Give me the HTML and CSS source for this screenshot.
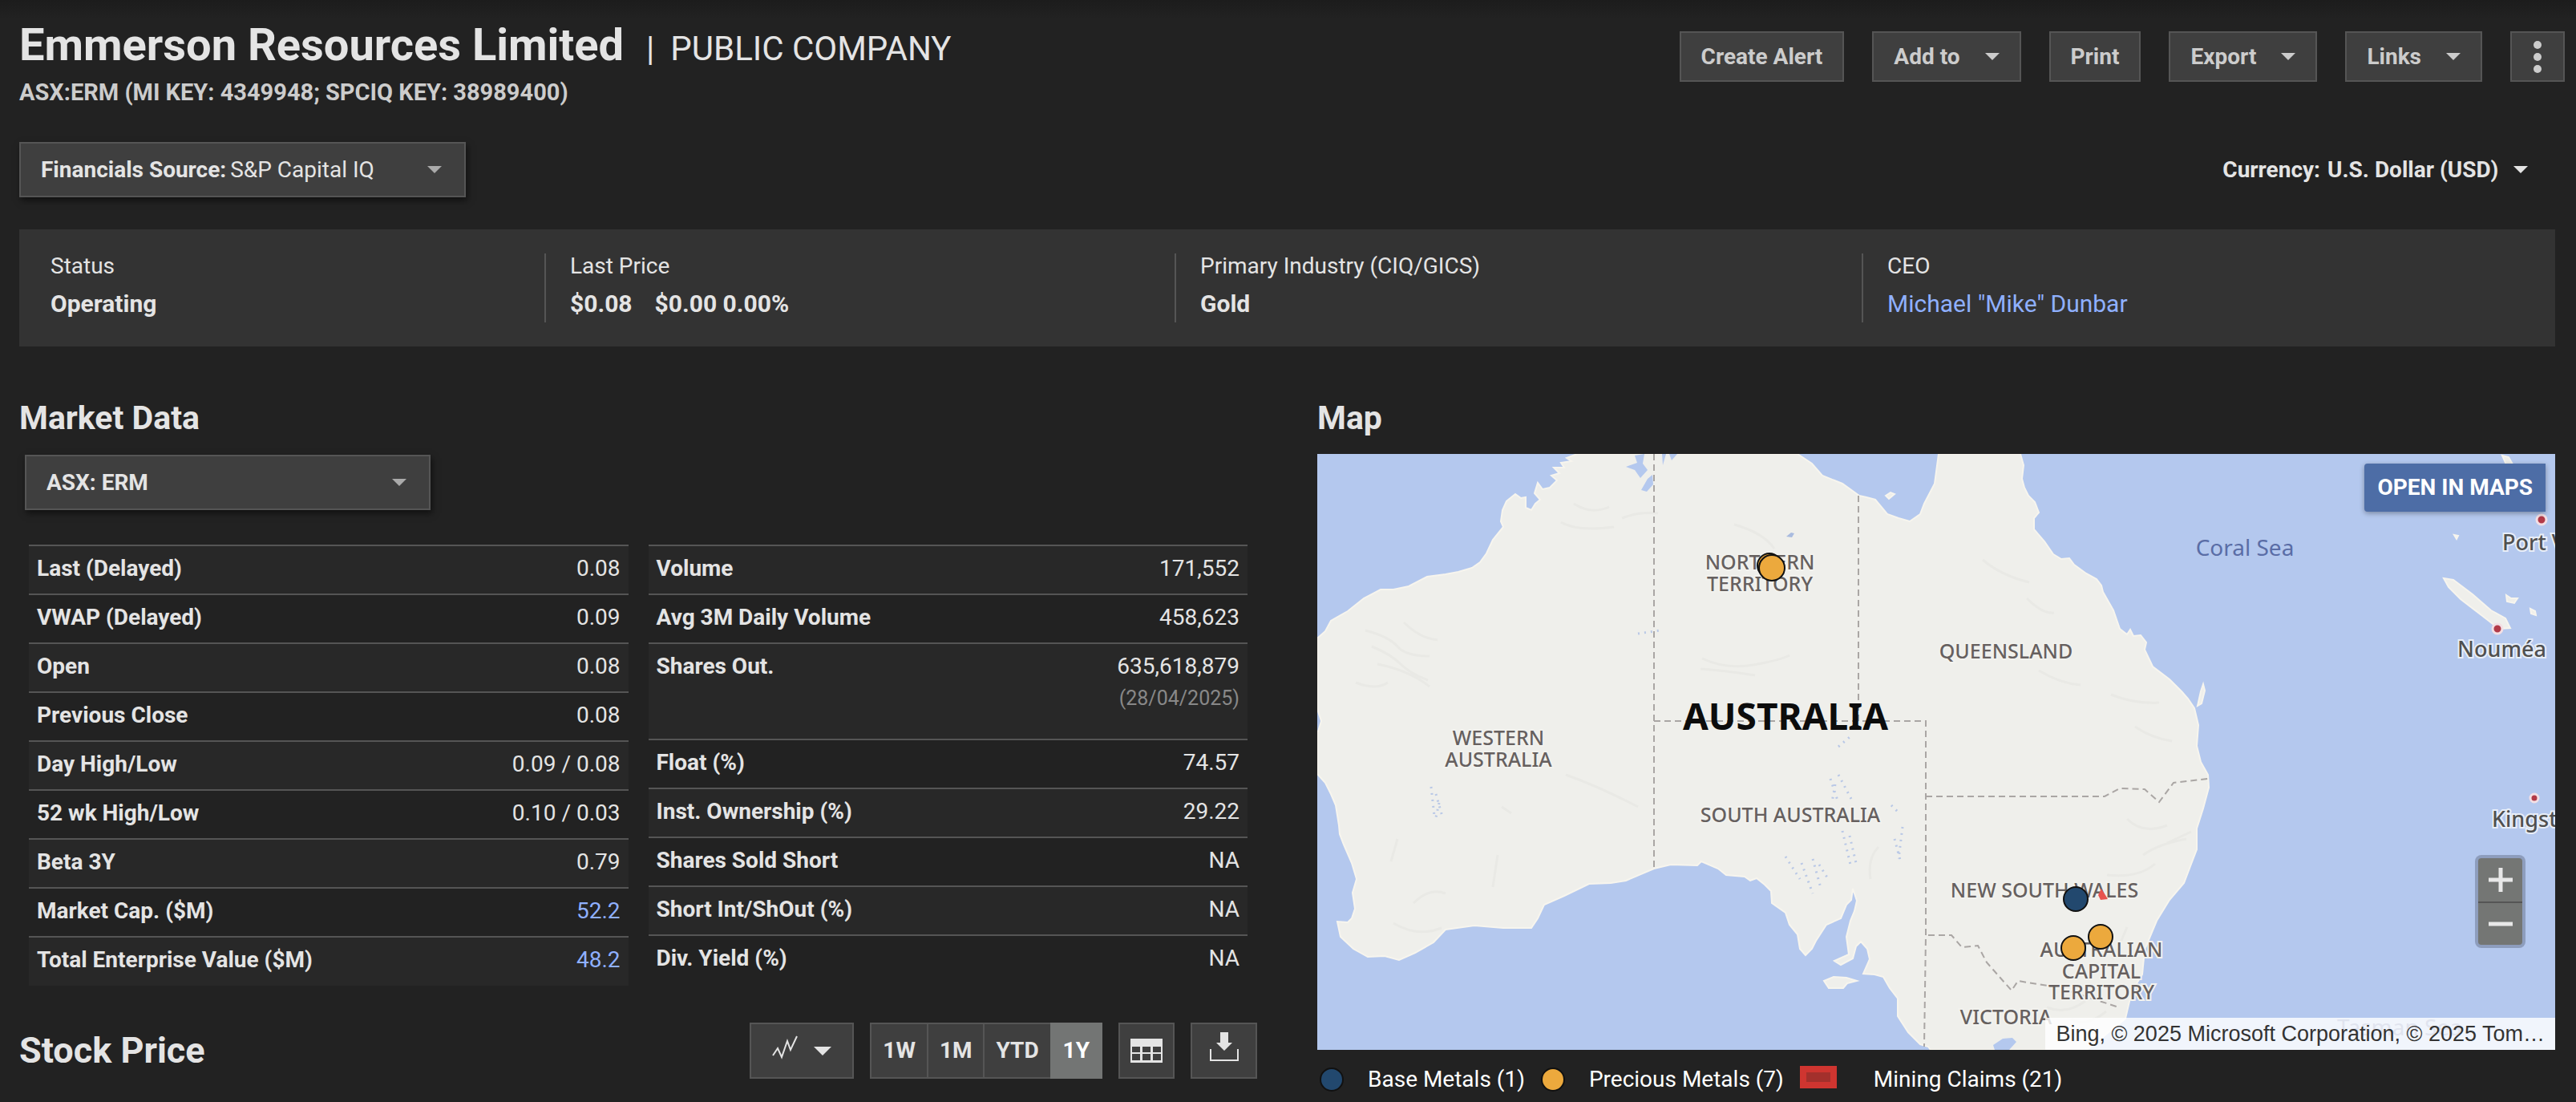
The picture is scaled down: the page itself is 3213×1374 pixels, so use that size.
FILE: index.html
```html
<!DOCTYPE html>
<html lang="en">
<head>
<meta charset="utf-8">
<title>Emmerson Resources Limited</title>
<link rel="stylesheet" href="styles.css">
</head>
<body>
<svg class="defs" aria-hidden="true">
  <symbol id="caret" viewBox="0 0 18 9"><path d="M0 0h18L9 9z" fill="currentColor"/></symbol>
</svg>
<main class="page">
  <header class="header">
    <div class="identity">
      <h1 class="title">Emmerson Resources Limited <span class="title-type"><span class="bar">|</span>PUBLIC COMPANY</span></h1>
      <p class="keys">ASX:ERM (MI KEY: 4349948; SPCIQ KEY: 38989400)</p>
    </div>
    <div class="actions">
      <button class="btn">Create Alert</button>
      <button class="btn">Add to<svg class="caret"><use href="#caret"/></svg></button>
      <button class="btn">Print</button>
      <button class="btn">Export<svg class="caret"><use href="#caret"/></svg></button>
      <button class="btn">Links<svg class="caret"><use href="#caret"/></svg></button>
      <button class="btn btn-more" aria-label="More"><svg viewBox="0 0 10 40" class="more"><circle cx="5" cy="5" r="5"/><circle cx="5" cy="20" r="5"/><circle cx="5" cy="35" r="5"/></svg></button>
    </div>
  </header>

  <div class="settings">
    <div class="picker picker-source">
      <label for="source">Financials Source:</label>
      <select id="source"><option>S&amp;P Capital IQ</option></select>
      <svg class="caret"><use href="#caret"/></svg>
    </div>
    <div class="currency">
      <label for="currency">Currency:</label>
      <select id="currency"><option>U.S. Dollar (USD)</option></select>
      <svg class="caret"><use href="#caret"/></svg>
    </div>
  </div>

  <dl class="summary">
    <div class="fact"><dt>Status</dt><dd>Operating</dd></div>
    <div class="fact"><dt>Last Price</dt><dd>$0.08<span class="change">$0.00 0.00%</span></dd></div>
    <div class="fact"><dt>Primary Industry (CIQ/GICS)</dt><dd>Gold</dd></div>
    <div class="fact"><dt>CEO</dt><dd><a class="link" href="#">Michael "Mike" Dunbar</a></dd></div>
  </dl>

  <div class="columns">
    <section class="column">
      <h2 class="heading">Market Data</h2>
      <div class="picker picker-ticker">
        <select id="ticker" aria-label="Ticker"><option>ASX: ERM</option></select>
        <svg class="caret"><use href="#caret"/></svg>
      </div>
      <div class="tables">
        <table class="data">
          <tr><th scope="row">Last (Delayed)</th><td>0.08</td></tr>
          <tr><th scope="row">VWAP (Delayed)</th><td>0.09</td></tr>
          <tr><th scope="row">Open</th><td>0.08</td></tr>
          <tr><th scope="row">Previous Close</th><td>0.08</td></tr>
          <tr><th scope="row">Day High/Low</th><td>0.09 / 0.08</td></tr>
          <tr><th scope="row">52 wk High/Low</th><td>0.10 / 0.03</td></tr>
          <tr><th scope="row">Beta 3Y</th><td>0.79</td></tr>
          <tr><th scope="row">Market Cap. ($M)</th><td><a class="link" href="#">52.2</a></td></tr>
          <tr><th scope="row">Total Enterprise Value ($M)</th><td><a class="link" href="#">48.2</a></td></tr>
        </table>
        <table class="data">
          <tr><th scope="row">Volume</th><td>171,552</td></tr>
          <tr><th scope="row">Avg 3M Daily Volume</th><td>458,623</td></tr>
          <tr class="tall"><th scope="row">Shares Out.</th><td>635,618,879<span class="asof">(28/04/2025)</span></td></tr>
          <tr><th scope="row">Float (%)</th><td>74.57</td></tr>
          <tr><th scope="row">Inst. Ownership (%)</th><td>29.22</td></tr>
          <tr><th scope="row">Shares Sold Short</th><td>NA</td></tr>
          <tr><th scope="row">Short Int/ShOut (%)</th><td>NA</td></tr>
          <tr><th scope="row">Div. Yield (%)</th><td>NA</td></tr>
        </table>
      </div>
      <div class="stock">
        <h2 class="heading heading-lg">Stock Price</h2>
        <div class="tools">
          <button class="tool tool-chart" aria-label="Chart type"><svg viewBox="0 0 32 30" class="ic-chart"><path d="M1 25l6-9 5 11 7-20 4 11L31 1" fill="none" stroke="currentColor" stroke-width="2"/></svg><svg class="caret caret-lg"><use href="#caret"/></svg></button>
          <div class="ranges">
            <button class="range">1W</button><button class="range">1M</button><button class="range">YTD</button><button class="range active">1Y</button>
          </div>
          <button class="tool" aria-label="Table"><svg viewBox="0 0 40 30" class="ic-table"><path fill-rule="evenodd" fill="currentColor" d="M0 0h40v30H0zM2 10v7h10v-7zM15 10v7h10v-7zM28 10v7h10v-7zM2 19v8h10v-8zM15 19v8h10v-8zM28 19v8h10v-8z"/></svg></button>
          <button class="tool tool-download" aria-label="Download"><svg viewBox="0 0 36 36" class="ic-download"><path fill="currentColor" d="M13 0h10v13h5L18 23 8 13h5z"/><path d="M1 21v14h34V21" fill="none" stroke="currentColor" stroke-width="2"/></svg></button>
        </div>
      </div>
    </section>

    <section class="column">
      <h2 class="heading">Map</h2>
      <div class="map">
        <svg class="map-art" viewBox="0 0 1544 743" preserveAspectRatio="xMidYMid slice">
          <rect width="1544" height="743" fill="#b4c8ee"/>
          <path class="land" d="M324 0L311 5 317 9 304 11 308 17 295 17 302 24 292 27 299 33 290 42 281 44 275 36 271 49 278 57 272 62 267 70 260 67 260 54 254 55 247 50 236 59 231 70 229 84 232 91 219 107 211 124 203 135 193 142 176 147 160 150 137 153 114 165 95 169 79 169 58 180 38 196 17 208 10 221 1 229 0 229V318L5 333 1 346 0 346V399L10 410 17 424 23 438 27 463 28 474 33 487 43 510 49 530 44 547 47 567 43 579 38 584 25 583 29 602 45 617 63 627 84 626 102 631 122 622 145 609 160 593 196 588 232 591 267 591 275 579 283 562 308 551 339 536 366 535 385 532 420 517 441 512 474 513 479 508 500 517 510 525 533 527 540 532 548 529 558 537 566 545 567 560 584 572 589 587 599 599 602 617 609 625 617 617 622 607 635 587 653 579 660 562 666 556 668 542 673 557 670 570 665 582 660 602 663 624 645 632 653 637 668 629 672 614 678 608 686 617 689 630 681 648 695 649 706 652 714 666 724 679 724 701 737 721 752 736 762 739 765 743H960L1008 704 1011 691 1016 670 1029 649 1032 618 1047 582 1063 556 1081 535 1089 514 1097 493 1097 467 1105 442 1112 416 1111 400 1102 384 1097 364 1099 338 1094 317 1086 305 1078 296 1063 281 1042 265 1032 244 1034 235 1027 226 1018 227 1014 219 1010 225 1001 218 993 195 980 172 978 164 972 156 959 149 944 138 938 130 928 131 918 125 907 109 894 94 894 80 900 73 895 60 887 52 882 42 879 31 881 14 877 0H775L770 37 757 62 752 75 739 84 725 80 711 75 696 57 685 54 676 52 655 37 630 27 617 12 599 0z"/>
          <path class="land" d="M632 657l12-5 16 1 13 4-12 3-5 6-18 0zM1102 296l3-9 2 8-4 16-5 3zM1405 155l12 2 24 18 23 20 18 10 6 12-14 1-22-17-26-20-15-15zM1483 176l6 4 8 0-4 6-9-2zM1513 193l6 3 1 5-6-2zM1478 2l8 2 8 14-8 2zM1418 101l5 1-2 4zM709 52l6-4 5 2-7 6z"/>
          <path class="water" d="M385 16l14-5-3-9 12-2-2 12 6 8-9 10-7-10zM404 45l8-14 6-5 1 12-8 9zM439 0l3 8 7-8zM430 0l1 14 4-14zM843 737l12-8 12-1 5 5-9 10h-18zM262 64l3-12 6 2-3 10z"/>
          <g class="relief">
            <path d="M60 220q30 8 40 20t40 12M68 240q24 10 36 22t34 20M108 210q20 20 42 22M75 262q40 8 65 28M48 285q25 10 40 0M320 62q22 14 44 4M304 85q20 12 66 6M380 80q20-8 45-6M480 255q30 14 64 8t45-12M478 268q30 2 68 8M520 88q36 10 50 30M830 132q24 20 58 28M885 180q20 20 34 18M900 270q26 16 52 18M990 300q30 12 60 10M1020 340q20 14 46 18M1010 455q20 20 50 8M1030 500q20-14 54-20M985 525q40 4 60-14M1060 485l30-14M975 540q30 20 50 6M700 490q-14 14-10 40M1010 590q-8 20-18 40M910 690q24 10 48-8M940 705q20 10 44-10M95 585q30 18 60 6M120 560q20-20 40-12M100 480l-8 28M230 440l12 8M225 500l-6 40M310 400q40 14 90 40"/>
          </g>
          <path class="lakes" d="M142 415l4 36M148 424l8 28M152 435l-4 18M640 405l10 30M650 400l16 30M646 412l-4 22M655 470l10 42M664 476l8 34M604 510l14 38M618 505l10 36M584 502l18 28M626 512l10 16M720 480l8 30M730 465l-5 40M400 224l28-4M650 365l14-12M716 438l8 8"/>
          <path d="M585 103l6-5 4 1-3 5z" fill="#a9bbdf"/>
          <path class="border" d="M420 0V517M675 52V333M420 333H759V600L757 739M759 427H982L1001 417 1032 418 1050 434 1068 410 1111 405M762 600H791L804 615 824 613 835 634 866 669 874 657 923 665 1000 690"/>
          <g class="state" text-anchor="middle">
            <text x="552" y="144">NORTHERN</text><text x="552" y="171">TERRITORY</text>
            <text x="226" y="363">WESTERN</text><text x="226" y="390">AUSTRALIA</text>
            <text x="590" y="459">SOUTH AUSTRALIA</text>
            <text x="859" y="255">QUEENSLAND</text>
            <text x="907" y="553">NEW SOUTH WALES</text>
            <text x="978" y="627">AUSTRALIAN</text><text x="978" y="654">CAPITAL</text><text x="978" y="680">TERRITORY</text>
            <text x="859" y="711">VICTORIA</text>
          </g>
          <text class="country" text-anchor="middle" x="584" y="344">AUSTRALIA</text>
          <text class="sea" text-anchor="middle" x="1157" y="127">Coral Sea</text>
          <text class="sea" text-anchor="middle" x="1350" y="725">Tasman Sea</text>
          <g class="city">
            <text x="1478" y="120">Port Vila</text>
            <text x="1422" y="253">Nouméa</text>
            <text x="1465" y="465">Kingston</text>
          </g>
          <g class="city-dot">
            <circle cx="1527" cy="82" r="6"/><circle cx="1472" cy="218" r="6"/><circle cx="1518" cy="429" r="5"/>
          </g>
          <path d="M978 542l5 8 3 5-9 1-3-6z" fill="#e8544f"/>
          <g stroke="#111" stroke-width="2">
            <circle cx="564" cy="139" r="15" fill="#e0a03a"/>
            <circle cx="567" cy="142" r="16" fill="#eca93d"/>
            <circle cx="946" cy="555" r="15" fill="#22486e"/>
            <circle cx="977" cy="602" r="15" fill="#eca93d"/>
            <circle cx="943" cy="616" r="15" fill="#eca93d"/>
          </g>
        </svg>
        <button class="open-maps">OPEN IN MAPS</button>
        <div class="zoom">
          <button aria-label="Zoom in"><svg viewBox="0 0 32 32"><path d="M1 16h30M16 1v30"/></svg></button>
          <button aria-label="Zoom out"><svg viewBox="0 0 32 32"><path d="M1 16h30"/></svg></button>
        </div>
        <div class="credit">Bing, © 2025 Microsoft Corporation, © 2025 Tom…</div>
      </div>
      <ul class="legend">
        <li><svg viewBox="0 0 30 30" class="dot"><circle cx="15" cy="15" r="14" fill="#22486e" stroke="#111" stroke-width="2"/></svg>Base Metals (1)</li>
        <li><svg viewBox="0 0 30 30" class="dot"><circle cx="15" cy="15" r="14" fill="#eca93d" stroke="#111" stroke-width="2"/></svg>Precious Metals (7)</li>
        <li><svg viewBox="0 0 46 28" class="claim"><path d="M0 0h46v28H0z" fill="#cf3530"/><path d="M8 8h30v12H8z" fill="#a3302c"/></svg>Mining Claims (21)</li>
      </ul>
    </section>
  </div>
</main>
</body>
</html>
```
FILE: styles.css
```css
* { box-sizing: border-box; }

body {
  margin: 0;
  background: #222 linear-gradient(#1c1c1c, #222 24px) no-repeat;
  color: #e4e4e4;
  font: 28px/32px Roboto, "Liberation Sans", sans-serif;
}

h1, h2, p, dl, dd, ul { margin: 0; padding: 0; }
button, select { font: inherit; color: inherit; }
button { cursor: pointer; }

.defs { position: absolute; width: 0; height: 0; }
.page { padding: 24px 26px 0 24px; }
.link { color: #8fb0ff; text-decoration: none; }
.caret { width: 18px; height: 9px; flex: none; }

.header { display: flex; justify-content: space-between; align-items: flex-start; }
.title { font-size: 56px; line-height: 64px; font-weight: 700; white-space: nowrap; }
.title-type { font-size: 42px; font-weight: 400; margin-left: 14px; }
.bar { margin-right: 20px; }
.keys { margin-top: 6px; font-size: 29px; line-height: 32px; font-weight: 700; color: #ccc; }

.actions { display: flex; gap: 35px; margin: 15px -12px 0 0; }
.btn {
  display: flex; align-items: center; justify-content: center;
  height: 63px; padding: 0 25px; gap: 31px;
  background: #3f3f3f; border: 2px solid #555; color: #ccc; font-weight: 700;
}
.btn-more { width: 68px; padding: 0; }
.more { width: 10px; height: 40px; fill: #ccc; }

.settings { display: flex; justify-content: space-between; align-items: center; margin-top: 46px; }
.picker {
  display: flex; align-items: center; height: 69px; padding: 0 28px 0 25px;
  background: #3f3f3f; border: 2px solid #555; box-shadow: 2px 4px 8px #0008;
}
.picker .caret { color: #aaa; }
.picker label, .currency label { font-weight: 700; white-space: nowrap; }
.picker select, .currency select {
  appearance: none; background: none; border: 0; padding: 0 0 0 5px; margin: 0;
}
.picker select { flex: 1; }
.picker-source { width: 557px; }
.picker-ticker { width: 506px; margin: 22px 0 0 7px; font-weight: 700; }
.picker-ticker select { padding-left: 0; }
.currency { display: flex; align-items: center; gap: 4px; font-weight: 700; padding-right: 34px; }
.currency .caret { margin-left: 14px; }

.summary {
  display: grid; grid-template-columns: 655fr 786fr 857fr 865fr;
  margin-top: 40px; padding: 30px 0; background: #333;
}
.fact { height: 86px; padding: 0 30px; border-left: 2px solid #555; }
.fact:first-child { padding-left: 37px; border-left-color: transparent; }
.fact dd { margin-top: 15px; font-size: 30px; font-weight: 700; }
.fact dd .link { font-weight: 400; }
.change { margin-left: 28px; }

.columns { display: grid; grid-template-columns: 1fr 1fr; gap: 75px; margin-top: 65px; }
.column { min-width: 0; }
.heading { font-size: 41px; line-height: 48px; font-weight: 700; }
.heading-lg { font-size: 45px; }

.tables { display: grid; grid-template-columns: 1fr 1fr; gap: 25px; align-items: start; margin: 43px 12px 0; }
.data { width: 100%; border-collapse: collapse; }
.data tr { height: 61px; border-top: 2px solid #555; }
.data tr:nth-child(odd) { background: #282828; }
.data tr.tall { height: 120px; }
.data th, .data td { padding: 12px 10px 0; vertical-align: top; }
.data th { text-align: left; font-weight: 700; }
.data td { text-align: right; }
.asof { display: block; margin-top: 8px; font-size: 25px; color: #888; }

.stock { display: flex; justify-content: space-between; align-items: center; margin-top: 46px; }
.tools { display: flex; gap: 20px; height: 70px; }
.tool {
  display: flex; align-items: center; justify-content: center; width: 70px; padding: 0;
  background: #3f3f3f; border: 2px solid #555;
}
.tool-chart { width: 130px; gap: 20px; }
.tool-download { width: 83px; }
.ic-chart { width: 32px; height: 30px; margin-bottom: 8px; }
.ic-table { width: 40px; height: 30px; }
.ic-download { width: 36px; height: 36px; margin-bottom: 10px; }
.caret-lg { width: 22px; height: 11px; }
.ranges { display: flex; border: 2px solid #555; background: #3f3f3f; }
.range { padding: 0 14px; border: 0; border-right: 2px solid #555; background: none; font-weight: 700; }
.range.active { margin: -2px; padding: 0 16px; border: 0; background: #737574; color: #fff; }

.map { position: relative; margin-top: 21px; aspect-ratio: 1544 / 743; overflow: hidden; }
.map-art { display: block; width: 100%; height: 100%; font-family: "Noto Sans", "Open Sans", sans-serif; }
.land { fill: #efefeb; stroke: #f7f5ee; stroke-width: 2; }
.water { fill: #b4c8ee; }
.relief { fill: none; stroke: #e9e9e5; stroke-width: 3; }
.lakes { fill: none; stroke: #b9c8e6; stroke-width: 3; stroke-dasharray: 2 6; }
.border { fill: none; stroke: #aaa6a4; stroke-width: 2; stroke-dasharray: 8 5; }
.state { font-size: 25px; font-weight: 500; fill: #66605f; stroke: #f2f2ee; stroke-width: 4; paint-order: stroke; }
.country { font-size: 46px; font-weight: 700; fill: #0c0c0c; }
.sea { font-size: 28px; fill: #5a6da6; }
.city { font-size: 27px; font-weight: 500; fill: #505050; stroke: #e8eef8; stroke-width: 4; paint-order: stroke; }
.city-dot { fill: #b23a48; stroke: #f3dfe4; stroke-width: 3; }

.open-maps {
  position: absolute; top: 12px; right: 12px; height: 60px; padding: 0 16px;
  background: #4d6da6; color: #fff; border: 0; border-radius: 4px 0 0 4px;
  font-weight: 700; box-shadow: 0 2px 6px #0005;
}
.zoom {
  position: absolute; right: 37px; bottom: 127px; width: 63px; padding: 4px;
  background: #8d9dbd; border-radius: 8px;
}
.zoom button {
  display: flex; align-items: center; justify-content: center; width: 100%; height: 54px; padding: 0;
  background: #747674; border: 0; border-radius: 4px 4px 0 0;
}
.zoom button + button { border-top: 2px solid #555; border-radius: 0 0 4px 4px; }
.zoom svg { width: 32px; height: 32px; stroke: #e8e8e8; stroke-width: 5; }
.credit {
  position: absolute; right: 0; bottom: 0; padding: 4px 13px;
  background: #ffffffd0; color: #333; font: 27px/32px "Liberation Sans", sans-serif; white-space: nowrap;
}
.legend { display: flex; gap: 20px; margin-top: 20px; padding-left: 3px; list-style: none; color: #fff; }
.legend li { display: flex; align-items: center; gap: 30px; }
.dot { width: 30px; height: 30px; }
.claim { width: 46px; height: 28px; margin: 0 16px 6px 0; }
```
